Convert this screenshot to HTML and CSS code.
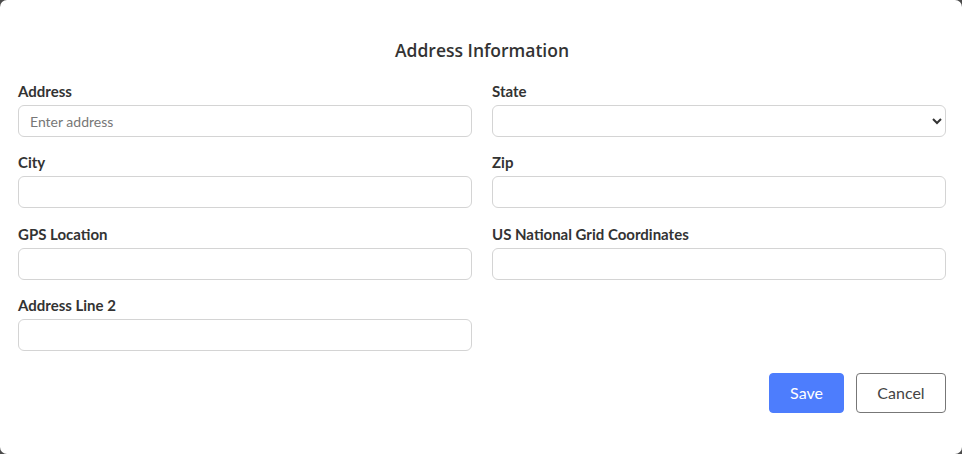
FILE: index.html
```html
<!DOCTYPE html>
<html lang="en">
<head>
<meta charset="utf-8">
<title>Address Information</title>
<link rel="stylesheet" href="styles.css">
</head>
<body>
<div class="modal">
  <h2 class="title">Address Information</h2>
  <div class="grid">
    <div class="field">
      <label class="label" for="address">Address</label>
      <input class="input" id="address" type="text" placeholder="Enter address">
    </div>
    <div class="field">
      <label class="label" for="state">State</label>
      <select class="input select" id="state"><option></option></select>
    </div>
    <div class="field">
      <label class="label" for="city">City</label>
      <input class="input" id="city" type="text">
    </div>
    <div class="field">
      <label class="label" for="zip">Zip</label>
      <input class="input" id="zip" type="text">
    </div>
    <div class="field">
      <label class="label" for="gps">GPS Location</label>
      <input class="input" id="gps" type="text">
    </div>
    <div class="field">
      <label class="label" for="usng">US National Grid Coordinates</label>
      <input class="input" id="usng" type="text">
    </div>
    <div class="field">
      <label class="label" for="addr2">Address Line 2</label>
      <input class="input" id="addr2" type="text">
    </div>
  </div>
  <div class="actions">
    <button class="btn btn-primary" type="button">Save</button>
    <button class="btn btn-secondary" type="button">Cancel</button>
  </div>
</div>
</body>
</html>
```

FILE: styles.css
```css
html, body {
  margin: 0;
  padding: 0;
  background: #4b4b4b;
}
body {
  font-family: Lato, "Liberation Sans", sans-serif;
  color: #333;
}
.modal {
  box-sizing: border-box;
  width: 962px;
  height: 454px;
  background: #fff;
  border-radius: 7px;
  padding: 38px 16px 0 18px;
}
.title {
  margin: 0 0 19px;
  text-align: center;
  font-family: "Open Sans", Lato, sans-serif;
  font-size: 17.5px;
  line-height: 24px;
  font-weight: 600;
  color: #333;
}
.grid {
  display: grid;
  grid-template-columns: 1fr 1fr;
  column-gap: 20px;
  row-gap: 15.3px;
}
.field {
  display: flex;
  flex-direction: column;
}
.label {
  font-size: 15px;
  line-height: 20px;
  font-weight: 700;
  color: #333;
  margin-bottom: 4px;
}
.input {
  box-sizing: border-box;
  height: 32px;
  width: 100%;
  border: 1px solid #d4d4d4;
  border-radius: 6px;
  padding: 0 11px;
  font-family: Lato, "Liberation Sans", sans-serif;
  font-size: 14px;
  color: #333;
  background: #fff;
  outline: none;
}
.input::placeholder {
  color: #777;
}
.select {
  padding: 0 6px;
}
.actions {
  display: flex;
  justify-content: flex-end;
  gap: 12px;
  margin-top: 22px;
}
.btn {
  box-sizing: border-box;
  height: 40px;
  border-radius: 4px;
  font-family: Lato, "Liberation Sans", sans-serif;
  font-size: 16px;
  cursor: pointer;
}
.btn-primary {
  width: 75px;
  background: #4d7dfd;
  border: 1px solid #4d7dfd;
  color: #fff;
}
.btn-secondary {
  width: 90px;
  background: #fff;
  border: 1px solid #777;
  color: #444;
}
```
